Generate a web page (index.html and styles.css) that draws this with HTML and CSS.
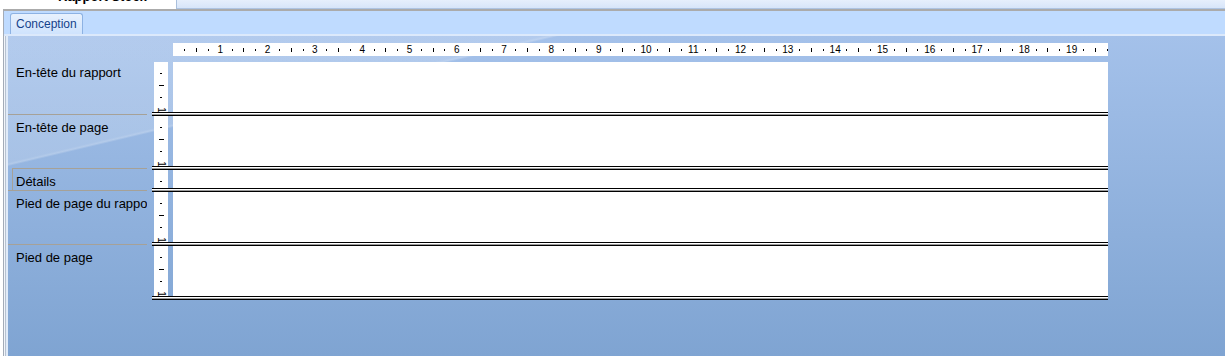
FILE: index.html
```html
<!DOCTYPE html>
<html lang="fr">
<head>
    <meta charset="UTF-8">
    <meta name="viewport" content="width=device-width, initial-scale=1.0">
    <title>Rapport Stock</title>
    <link rel="stylesheet" href="styles.css">
</head>
<body>

<div class="doc-tabs">
    <div class="doc-tab"><span>Rapport Stock</span></div>
    <div class="doc-strip"></div>
</div>

<div class="frame">
    <div class="view-bar">
        <div class="view-tab">Conception</div>
    </div>

    <div class="editor">
        <div class="design">
            <!-- horizontal ruler, 1 cm = 47.3px -->
            <div class="hruler">
                <div class="cm"><i class="q"></i><i class="h"></i><i class="q"></i><b>1</b></div>
                <div class="cm"><i class="q"></i><i class="h"></i><i class="q"></i><b>2</b></div>
                <div class="cm"><i class="q"></i><i class="h"></i><i class="q"></i><b>3</b></div>
                <div class="cm"><i class="q"></i><i class="h"></i><i class="q"></i><b>4</b></div>
                <div class="cm"><i class="q"></i><i class="h"></i><i class="q"></i><b>5</b></div>
                <div class="cm"><i class="q"></i><i class="h"></i><i class="q"></i><b>6</b></div>
                <div class="cm"><i class="q"></i><i class="h"></i><i class="q"></i><b>7</b></div>
                <div class="cm"><i class="q"></i><i class="h"></i><i class="q"></i><b>8</b></div>
                <div class="cm"><i class="q"></i><i class="h"></i><i class="q"></i><b>9</b></div>
                <div class="cm"><i class="q"></i><i class="h"></i><i class="q"></i><b>10</b></div>
                <div class="cm"><i class="q"></i><i class="h"></i><i class="q"></i><b>11</b></div>
                <div class="cm"><i class="q"></i><i class="h"></i><i class="q"></i><b>12</b></div>
                <div class="cm"><i class="q"></i><i class="h"></i><i class="q"></i><b>13</b></div>
                <div class="cm"><i class="q"></i><i class="h"></i><i class="q"></i><b>14</b></div>
                <div class="cm"><i class="q"></i><i class="h"></i><i class="q"></i><b>15</b></div>
                <div class="cm"><i class="q"></i><i class="h"></i><i class="q"></i><b>16</b></div>
                <div class="cm"><i class="q"></i><i class="h"></i><i class="q"></i><b>17</b></div>
                <div class="cm"><i class="q"></i><i class="h"></i><i class="q"></i><b>18</b></div>
                <div class="cm"><i class="q"></i><i class="h"></i><i class="q"></i><b>19</b></div>
                <div class="cm"><i class="q"></i><i class="h"></i><i class="q"></i><b></b></div>
            </div>

            <div class="sections">
                <div class="labels">
                    <div class="label">En-tête du rapport</div>
                    <div class="label">En-tête de page</div>
                    <div class="label short active">Détails</div>
                    <div class="label">Pied de page du rapport</div>
                    <div class="label">Pied de page</div>
                </div>

                <div class="bands">
                    <div class="band">
                        <div class="vruler"><i class="q"></i><i class="h"></i><i class="q"></i><b>1</b></div>
                        <div class="area"></div>
                    </div>
                    <div class="sep"></div>
                    <div class="band">
                        <div class="vruler"><i class="q"></i><i class="h"></i><i class="q"></i><b>1</b></div>
                        <div class="area"></div>
                    </div>
                    <div class="sep"></div>
                    <div class="band short">
                        <div class="vruler"><i class="q"></i></div>
                        <div class="area"></div>
                    </div>
                    <div class="sep"></div>
                    <div class="band">
                        <div class="vruler"><i class="q"></i><i class="h"></i><i class="q"></i><b>1</b></div>
                        <div class="area"></div>
                    </div>
                    <div class="sep"></div>
                    <div class="band">
                        <div class="vruler"><i class="q"></i><i class="h"></i><i class="q"></i><b>1</b></div>
                        <div class="area"></div>
                    </div>
                    <div class="sep"></div>
                </div>
            </div>
        </div>
    </div>
</div>

</body>
</html>
```

FILE: styles.css
```css
body {
    margin: 0;
    height: 356px;
    overflow: hidden;
    background-color: #fff;
    font-family: "Liberation Sans", Arial, sans-serif;
}

/* document tabs (cut off at the top) */
.doc-tabs {
    display: flex;
    height: 9px;
}
.doc-tab {
    width: 159px;
    margin-left: 17px;
    background-color: #fff;
    border-right: 1px solid #a9bfdc;
    clip-path: polygon(8px 0, 100% 0, 100% 100%, 0 100%);
    overflow: hidden;
}
.doc-tab span {
    display: block;
    margin-top: -11px;
    padding-left: 41px;
    font-size: 13px;
    font-weight: bold;
    line-height: 15px;
    white-space: nowrap;
}
.doc-strip {
    flex: 1;
    box-sizing: border-box;
    background: linear-gradient(#e6effc, #d7e5f9);
    border-bottom: 1px solid #aec4e2;
}

.frame {
    display: flex;
    flex-direction: column;
    height: 345px;
    margin-left: 3px;
    border-top: 2px solid #ababab;
    border-left: 1px solid #a3abb7;
}

/* view tabs */
.view-bar {
    display: flex;
    align-items: flex-end;
    height: 23px;
    padding-left: 6px;
    background-color: #bfdbff;
    border-bottom: 2px solid #dce9fb;
}
.view-tab {
    height: 21px;
    box-sizing: border-box;
    padding: 0 5px;
    border: 1px solid #8db2e3;
    border-bottom: none;
    border-radius: 3px 3px 0 0;
    background: linear-gradient(#e8f1fd, #cfe3fd);
    color: #15428b;
    font-size: 12px;
    line-height: 20px;
}

.editor {
    flex: 1;
    padding-left: 4px;
    background: linear-gradient(to right, #f2f5fa 0 1px, #b7c2d0 1px 2px, #e1ebf8 2px);
}
.design {
    height: 100%;
    overflow: hidden;
    background:
        linear-gradient(166.7deg, rgba(255, 255, 255, 0.17) 123px, rgba(255, 255, 255, 0.28) 125px, rgba(255, 255, 255, 0) 127px),
        linear-gradient(#a4c1ea, #7fa4d2);
}

/* horizontal ruler */
.hruler {
    display: flex;
    box-sizing: border-box;
    width: 935px;
    height: 13px;
    margin: 7px 0 0 165px;
    padding-left: 5.91px;
    background-color: #fff;
    overflow: hidden;
}
.hruler .cm {
    display: flex;
    flex: 0 0 47.3px;
}
.hruler .cm > * {
    flex: 1;
    display: flex;
    align-items: center;
    justify-content: center;
}
.hruler .q::before,
.hruler .h::before {
    content: '';
    width: 1px;
    height: 2px;
    background-color: #000;
}
.hruler .h::before {
    height: 4px;
}
.hruler b {
    font-size: 10px;
    font-weight: normal;
    line-height: 13px;
    white-space: nowrap;
}

.sections {
    display: flex;
    margin-top: 4px;
}

/* section labels */
.labels {
    flex: none;
    width: 139px;
}
.label {
    height: 54px;
    box-sizing: border-box;
    padding: 5px 0 0 8px;
    border-top: 1px solid #a6a197;
    font-size: 13px;
    line-height: 15px;
    white-space: nowrap;
    overflow: hidden;
}
.label:first-child {
    border-top: none;
}
.label.short {
    height: 22px;
}
.label.active {
    margin-left: 4px;
    padding-left: 3px;
    border-left: 1px solid #a6a197;
}

/* section bands */
.bands {
    flex: none;
    width: 956px;
    margin: 2px 0 0 5px;
}
.band {
    display: flex;
    height: 50px;
}
.band.short {
    height: 18px;
}
.vruler {
    display: flex;
    flex-direction: column;
    box-sizing: border-box;
    width: 14px;
    margin-left: 2px;
    padding-top: 5.91px;
    background-color: #fff;
    overflow: hidden;
}
.vruler > * {
    flex: 0 0 11.825px;
    display: flex;
    align-items: center;
    justify-content: center;
}
.vruler .q::before,
.vruler .h::before {
    content: '';
    width: 2px;
    height: 1px;
    background-color: #000;
}
.vruler .h::before {
    width: 5px;
}
.vruler b {
    font-size: 10px;
    font-weight: normal;
    line-height: 10px;
    transform: rotate(90deg) translateX(1px);
}
.area {
    flex: 1;
    margin-left: 5px;
    background-color: #fff;
}
.sep {
    height: 4px;
    background: linear-gradient(#000 0 1px, #fff 1px 2px, #9a9a9a 2px 3px, #000 3px);
}
```
